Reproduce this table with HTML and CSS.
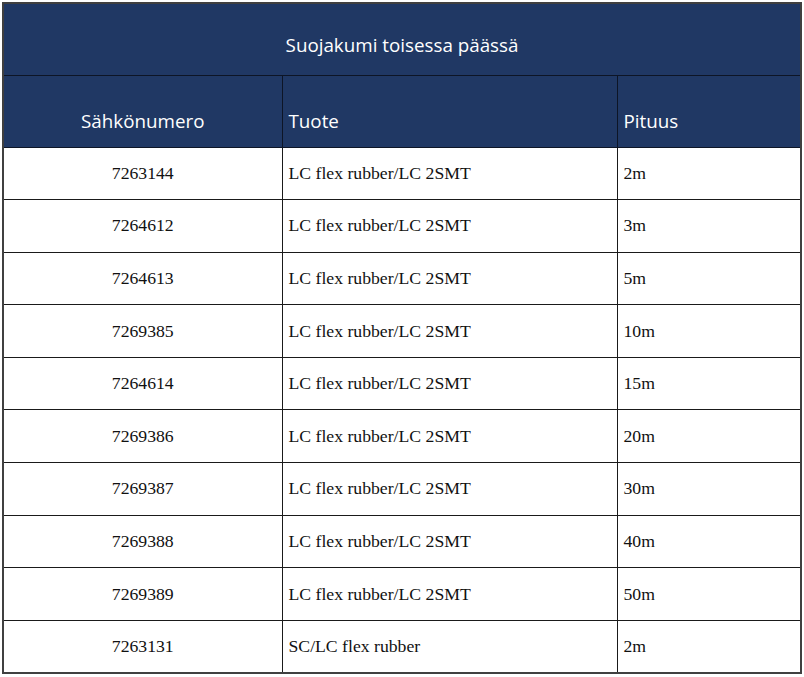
FILE: index.html
```html
<!DOCTYPE html>
<html lang="fi">
<head>
<meta charset="utf-8">
<title>Suojakumi toisessa päässä</title>
<link rel="stylesheet" href="styles.css">
</head>
<body>
<table class="tbl">
  <colgroup>
    <col class="c1"><col class="c2"><col class="c3">
  </colgroup>
  <thead>
    <tr class="h1"><th colspan="3" class="title">Suojakumi toisessa päässä</th></tr>
    <tr class="h2"><th class="center">Sähkönumero</th><th>Tuote</th><th>Pituus</th></tr>
  </thead>
  <tbody>
    <tr><td class="center">7263144</td><td>LC flex rubber/LC 2SMT</td><td>2m</td></tr>
    <tr><td class="center">7264612</td><td>LC flex rubber/LC 2SMT</td><td>3m</td></tr>
    <tr><td class="center">7264613</td><td>LC flex rubber/LC 2SMT</td><td>5m</td></tr>
    <tr><td class="center">7269385</td><td>LC flex rubber/LC 2SMT</td><td>10m</td></tr>
    <tr><td class="center">7264614</td><td>LC flex rubber/LC 2SMT</td><td>15m</td></tr>
    <tr><td class="center">7269386</td><td>LC flex rubber/LC 2SMT</td><td>20m</td></tr>
    <tr><td class="center">7269387</td><td>LC flex rubber/LC 2SMT</td><td>30m</td></tr>
    <tr><td class="center">7269388</td><td>LC flex rubber/LC 2SMT</td><td>40m</td></tr>
    <tr><td class="center">7269389</td><td>LC flex rubber/LC 2SMT</td><td>50m</td></tr>
    <tr><td class="center">7263131</td><td>SC/LC flex rubber</td><td>2m</td></tr>
  </tbody>
</table>
</body>
</html>
```
FILE: styles.css
```css
html, body {
  margin: 0;
  padding: 0;
  background: #ffffff;
}
body {
  padding: 2px 0 0 2px;
}
.tbl {
  border-collapse: collapse;
  width: 798px;
  table-layout: fixed;
  border: 2px solid #404040;
}
.c1 { width: 279px; }
.c2 { width: 335px; }
.c3 { width: 184px; }
.tbl th {
  background: #203864;
  color: #ffffff;
  font-family: "Open Sans", "Liberation Sans", sans-serif;
  font-weight: normal;
  font-size: 18.8px;
  text-align: left;
  padding: 0 0 0 6px;
  border: 1px solid #0d1526;
}
.tbl th.title {
  text-align: center;
  height: 72px;
  vertical-align: middle;
  padding: 12px 0 0 0;
  box-sizing: border-box;
}
.tbl .h2 th {
  height: 72px;
  vertical-align: bottom;
  padding-bottom: 13px;
  box-sizing: border-box;
}
.tbl th.center, .tbl td.center {
  text-align: center;
  padding-left: 0;
}
.tbl td {
  font-family: "Liberation Serif", "Times New Roman", serif;
  font-size: 17.7px;
  color: #111111;
  height: 51.6px;
  padding: 0 0 0 6px;
  border: 1px solid #1a1a1a;
  vertical-align: middle;
}
```
